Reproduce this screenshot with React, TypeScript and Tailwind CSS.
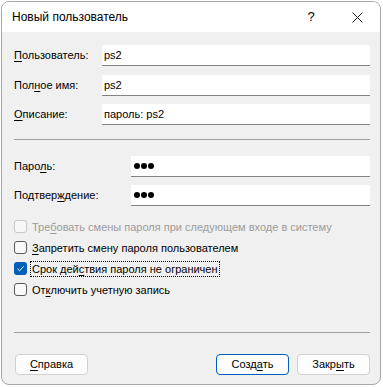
const font = { fontFamily: '"Liberation Sans", Arial, sans-serif' };

function U({ children }: { children: React.ReactNode }) {
  return <span className="underline underline-offset-[2px]">{children}</span>;
}

function Field({ label, value, labelWidth }: { label: React.ReactNode; value: React.ReactNode; labelWidth: string }) {
  return (
    <div className="flex items-center h-[21px]">
      <div className={`${labelWidth} shrink-0`}>{label}</div>
      <div className="flex-1 h-full bg-white border-b border-[#838383] pl-[2px] flex items-center">{value}</div>
    </div>
  );
}

function Dots() {
  return (
    <span className="flex gap-[1px] pl-[1px]">
      <span className="w-[6px] h-[6px] rounded-full bg-black" />
      <span className="w-[6px] h-[6px] rounded-full bg-black" />
      <span className="w-[6px] h-[6px] rounded-full bg-black" />
    </span>
  );
}

function Check({ checked, disabled, focused, children }: { checked?: boolean; disabled?: boolean; focused?: boolean; children: React.ReactNode }) {
  return (
    <div className="flex items-center h-[21px]">
      {checked ? (
        <span className="w-[13px] h-[13px] rounded-[3px] bg-[#005fb8] flex items-center justify-center">
          <svg width="9" height="9" viewBox="0 0 9 9" fill="none">
            <path d="M1.5 4.8 L3.6 6.8 L7.6 2.4" stroke="white" strokeWidth="1" />
          </svg>
        </span>
      ) : (
        <span
          className={`w-[13px] h-[13px] rounded-[3px] border ${disabled ? 'border-[#c8c8c8] bg-[#f7f7f7]' : 'border-[#5a5a5a] bg-[#f9f9f9]'}`}
        />
      )}
      <span
        className={`ml-[3px] px-[1px] leading-[14px] ${disabled ? 'text-[#9c9c9c]' : 'text-black'} ${focused ? 'border border-dotted border-black' : 'border border-transparent'}`}
      >
        {children}
      </span>
    </div>
  );
}

function Btn({ children, primary }: { children: React.ReactNode; primary?: boolean }) {
  return (
    <div
      className={`w-[73px] h-[21px] rounded-[4px] bg-[#fdfdfd] border flex items-center justify-center ${primary ? 'border-[#005fb8]' : 'border-[#d0d0d0]'}`}
    >
      {children}
    </div>
  );
}

export default function App() {
  return (
    <div className="w-[383px] h-[387px] bg-white pl-[1px] pt-[1px]" style={font}>
      <div className="w-[380px] h-[384px] border border-[#a8a8a8] rounded-[8px] overflow-hidden flex flex-col bg-[#f0f0f0]">
        {/* Title bar */}
        <div className="h-[30px] bg-white flex items-center shrink-0">
          <span className="pl-[10px] text-[12px] text-black flex-1">Новый пользователь</span>
          <span className="w-[46px] h-full flex items-center justify-center text-[13px] text-black">?</span>
          <span className="w-[46px] h-full flex items-center justify-center">
            <svg width="11" height="11" viewBox="0 0 11 11" fill="none">
              <path d="M0.5 0.5 L10.5 10.5 M10.5 0.5 L0.5 10.5" stroke="#1a1a1a" strokeWidth="1" />
            </svg>
          </span>
        </div>

        {/* Body */}
        <div className="flex-1 flex flex-col pl-[12px] pr-[10px] pt-[13px] text-[11px] text-black">
          <Field labelWidth="w-[88px]" label={<><U>П</U>ользователь:</>} value="ps2" />
          <div className="mt-[9px]">
            <Field labelWidth="w-[88px]" label={<>Пол<U>н</U>ое имя:</>} value="ps2" />
          </div>
          <div className="mt-[8px]">
            <Field labelWidth="w-[88px]" label={<><U>О</U>писание:</>} value="пароль: ps2" />
          </div>

          <div className="mt-[14px] h-[1px] bg-[#a0a0a0]" />

          <div className="mt-[16px]">
            <Field labelWidth="w-[117px]" label={<>Паро<U>л</U>ь:</>} value={<Dots />} />
          </div>
          <div className="mt-[8px]">
            <Field labelWidth="w-[117px]" label={<>Подтвер<U>ж</U>дение:</>} value={<Dots />} />
          </div>

          <div className="mt-[10px] flex flex-col">
            <Check disabled>
              Тре<U>б</U>овать смены пароля при следующем входе в систему
            </Check>
            <Check>
              <U>З</U>апретить смену пароля пользователем
            </Check>
            <Check checked focused>
              Срок дей<U>с</U>твия пароля не ограничен
            </Check>
            <Check>
              От<U>к</U>лючить учетную запись
            </Check>
          </div>

          <div className="mt-[32px] h-[1px] bg-[#a0a0a0]" />

          <div className="mt-[21px] flex items-center">
            <div className="ml-[1px]">
              <Btn>
                <span><U>С</U>правка</span>
              </Btn>
            </div>
            <div className="flex-1" />
            <Btn primary>
              <span>Созд<U>а</U>ть</span>
            </Btn>
            <div className="ml-[8px]">
              <Btn>
                <span>Закр<U>ы</U>ть</span>
              </Btn>
            </div>
          </div>
        </div>
      </div>
    </div>
  );
}
